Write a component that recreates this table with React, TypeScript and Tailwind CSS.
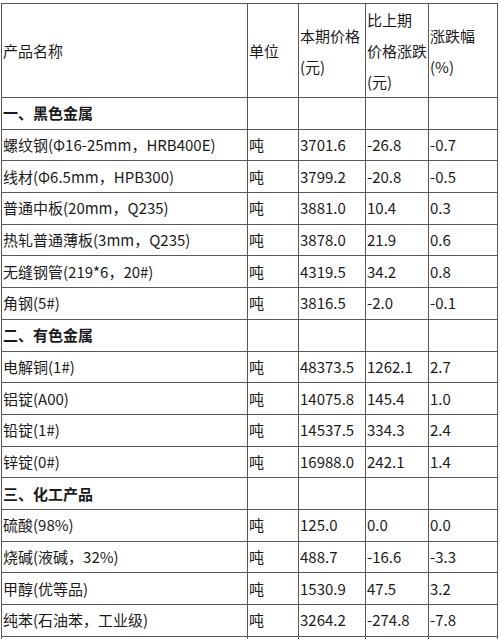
import React from 'react';

type Row =
  | { kind: 'section'; name: string }
  | { kind: 'item'; name: string; unit: string; price: string; diff: string; pct: string };

const rows: Row[] = [
  { kind: 'section', name: '一、黑色金属' },
  { kind: 'item', name: '螺纹钢(Φ16-25mm，HRB400E)', unit: '吨', price: '3701.6', diff: '-26.8', pct: '-0.7' },
  { kind: 'item', name: '线材(Φ6.5mm，HPB300)', unit: '吨', price: '3799.2', diff: '-20.8', pct: '-0.5' },
  { kind: 'item', name: '普通中板(20mm，Q235)', unit: '吨', price: '3881.0', diff: '10.4', pct: '0.3' },
  { kind: 'item', name: '热轧普通薄板(3mm，Q235)', unit: '吨', price: '3878.0', diff: '21.9', pct: '0.6' },
  { kind: 'item', name: '无缝钢管(219*6，20#)', unit: '吨', price: '4319.5', diff: '34.2', pct: '0.8' },
  { kind: 'item', name: '角钢(5#)', unit: '吨', price: '3816.5', diff: '-2.0', pct: '-0.1' },
  { kind: 'section', name: '二、有色金属' },
  { kind: 'item', name: '电解铜(1#)', unit: '吨', price: '48373.5', diff: '1262.1', pct: '2.7' },
  { kind: 'item', name: '铝锭(A00)', unit: '吨', price: '14075.8', diff: '145.4', pct: '1.0' },
  { kind: 'item', name: '铅锭(1#)', unit: '吨', price: '14537.5', diff: '334.3', pct: '2.4' },
  { kind: 'item', name: '锌锭(0#)', unit: '吨', price: '16988.0', diff: '242.1', pct: '1.4' },
  { kind: 'section', name: '三、化工产品' },
  { kind: 'item', name: '硫酸(98%)', unit: '吨', price: '125.0', diff: '0.0', pct: '0.0' },
  { kind: 'item', name: '烧碱(液碱，32%)', unit: '吨', price: '488.7', diff: '-16.6', pct: '-3.3' },
  { kind: 'item', name: '甲醇(优等品)', unit: '吨', price: '1530.9', diff: '47.5', pct: '3.2' },
  { kind: 'item', name: '纯苯(石油苯，工业级)', unit: '吨', price: '3264.2', diff: '-274.8', pct: '-7.8' },
];

const cell = 'border border-[#5a5a5a] px-px align-middle text-left';

export default function App() {
  return (
    <div
      className="h-[639px] overflow-hidden bg-white pl-px pt-[3px] text-[15px] text-[#1a1a1a]"
      style={{ fontFamily: '"Noto Sans CJK SC", "Noto Sans", sans-serif' }}
    >
      <table className="w-[496px] table-fixed border-collapse">
        <colgroup>
          <col className="w-[246px]" />
          <col className="w-[51px]" />
          <col className="w-[67px]" />
          <col className="w-[63px]" />
          <col className="w-[69px]" />
        </colgroup>
        <thead>
          <tr className="h-[93px] leading-[31px]">
            <th className={`${cell} font-normal`}>产品名称</th>
            <th className={`${cell} font-normal`}>单位</th>
            <th className={`${cell} font-normal`}>
              本期价格
              <br />
              (元)
            </th>
            <th className={`${cell} font-normal`}>
              比上期
              <br />
              价格涨跌
              <br />
              (元)
            </th>
            <th className={`${cell} font-normal`}>
              涨跌幅
              <br />
              (%)
            </th>
          </tr>
        </thead>
        <tbody>
          {rows.map((r, i) =>
            r.kind === 'section' ? (
              <tr key={i} className="h-[31.7px] leading-[28px]">
                <td className={`${cell} font-bold`}>{r.name}</td>
                <td className={cell}></td>
                <td className={cell}></td>
                <td className={cell}></td>
                <td className={cell}></td>
              </tr>
            ) : (
              <tr key={i} className="h-[31.7px] leading-[28px]">
                <td className={`${cell} whitespace-nowrap`}>{r.name}</td>
                <td className={cell}>{r.unit}</td>
                <td className={cell}>{r.price}</td>
                <td className={cell}>{r.diff}</td>
                <td className={cell}>{r.pct}</td>
              </tr>
            )
          )}
          <tr className="h-[31.7px] leading-[28px]">
            <td className={cell}>&nbsp;</td>
            <td className={cell}></td>
            <td className={cell}></td>
            <td className={cell}></td>
            <td className={cell}></td>
          </tr>
        </tbody>
      </table>
    </div>
  );
}
